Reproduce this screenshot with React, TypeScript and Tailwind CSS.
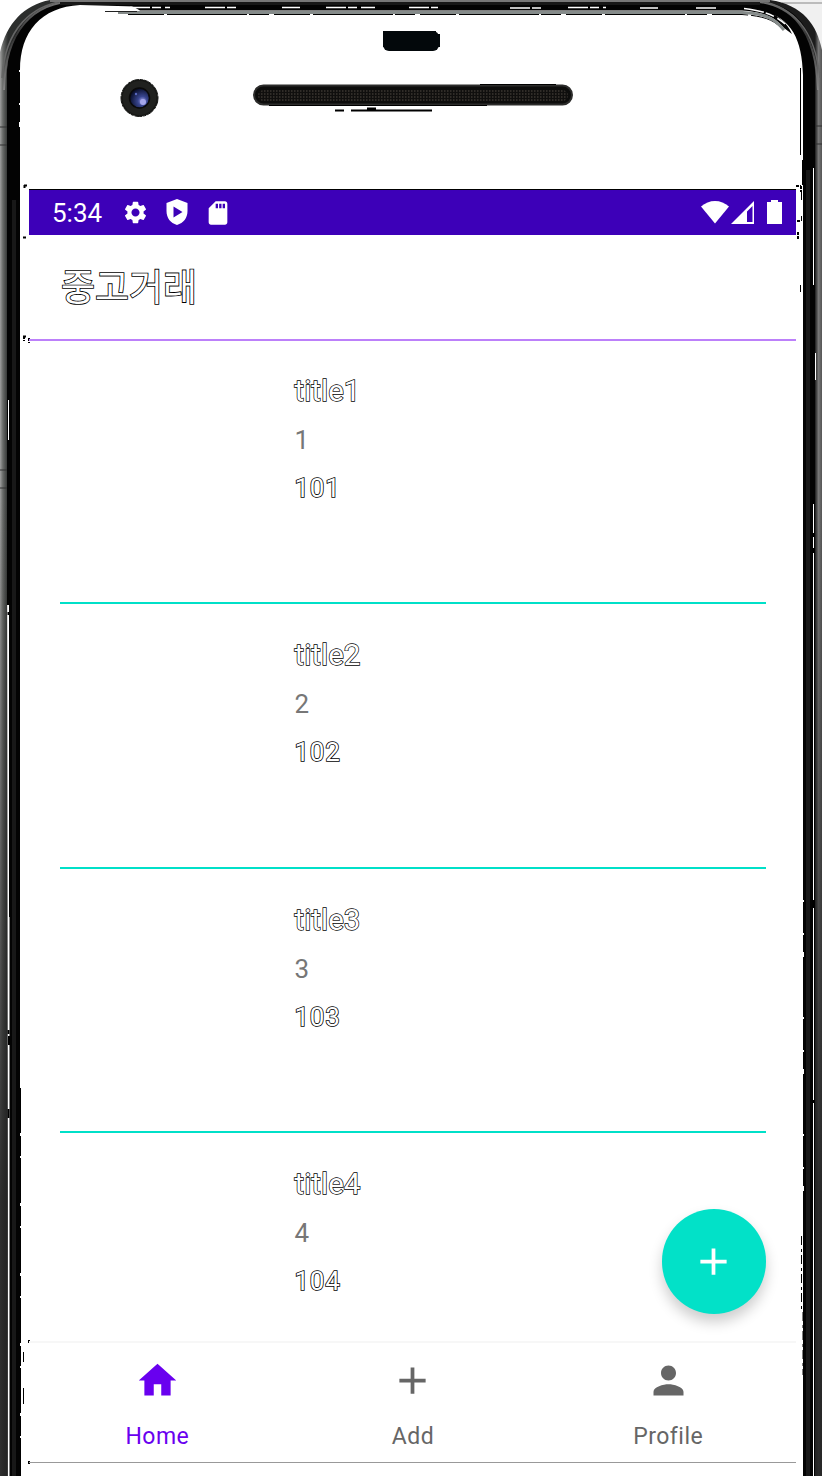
import React from "react";
import { MdHome, MdAdd, MdPerson, MdSettings, MdSdCard } from "react-icons/md";

const items = [1, 2, 3, 4];

function PhoneFrame() {
  return (
    <svg className="pointer-events-none absolute inset-0" width="822" height="1476" viewBox="0 0 822 1476" fill="none">
      <defs>
        <linearGradient id="left" x1="0" x2="8" y1="0" y2="0" gradientUnits="userSpaceOnUse">
          <stop offset="0" stopColor="#a0a0a0" />
          <stop offset="0.35" stopColor="#6a6c6a" />
          <stop offset="1" stopColor="#2c2e2d" />
        </linearGradient>
        <linearGradient id="right" x1="815" x2="822" y1="0" y2="0" gradientUnits="userSpaceOnUse">
          <stop offset="0" stopColor="#1c1c1c" />
          <stop offset="0.5" stopColor="#777" />
          <stop offset="1" stopColor="#555" />
        </linearGradient>
        <linearGradient id="shade" x1="0" x2="0" y1="500" y2="1200" gradientUnits="userSpaceOnUse">
          <stop offset="0" stopColor="#181818" stopOpacity="0" />
          <stop offset="1" stopColor="#222" stopOpacity="0.9" />
        </linearGradient>
        <linearGradient id="rim" x1="0" x2="0" y1="0" y2="90" gradientUnits="userSpaceOnUse">
          <stop offset="0" stopColor="#777" />
          <stop offset="0.4" stopColor="#333" />
          <stop offset="1" stopColor="#858585" />
        </linearGradient>
        <radialGradient id="lens" cx="0.65" cy="0.65" r="0.65">
          <stop offset="0" stopColor="#a9a8ee" />
          <stop offset="0.35" stopColor="#394690" />
          <stop offset="1" stopColor="#080d28" />
        </radialGradient>
        <pattern id="mesh" width="3" height="3" patternUnits="userSpaceOnUse">
          <rect width="3" height="3" fill="#100f0e" />
          <rect width="1.5" height="2" fill="#302c28" />
        </pattern>
      </defs>
      <path d="M775 0H822V70C818 35 803 8 775 0Z" fill="#f0f0f0" />
      <path d="M782 3H822" stroke="#bbb" strokeWidth="2" />
      <path d="M0 52C7 23 24 5 50 0H72C30 7 8 38 7 72V1476H0Z" fill="url(#left)" />
      <path d="M770 0C803 5 817 25 822 50V1476H815V75C812 30 798 10 752 0Z" fill="url(#right)" />
      <path d="M0 500H8V1476H0ZM815 500H822V1476H815Z" fill="url(#shade)" />
      <path d="M0 127H7M0 145H7M0 470H8M0 488H8M816 126H822M816 144H822" stroke="#303030" />
      <path d="M7 130V70C8 25 38 0 80 0H745C795 0 815 27 815 70V1476H803V75C802 34 788 10 745 9H230L80 5C41 7 20 32 20 70V1476H9V605H7Z" fill="#030303" />
      <path d="M14 200V1476M808 170V1476" stroke="#181818" strokeWidth="4" />
      <path d="M4 90C5 30 33 2 77 1H748C792 2 816 29 818 90" stroke="url(#rim)" strokeWidth="2" />
      <path d="M2 78C5 29 31 4 70 0M755 0C794 5 815 30 820 78" stroke="#666" strokeWidth="1.5" />
      <path d="M50 0H770" stroke="#777" strokeWidth="4" />
      <path d="M60 3.500H760" stroke="#171717" strokeWidth="3" />
      <path d="M128 14.500H742C764 16 775 20 783 30" stroke="#000" strokeDasharray="36 3 80 2 20 5" />
      <path d="M130 5H742C764 6 785 17 792 34L784 28C776 18 765 12 742 10.500H140Z" fill="#030303" />
      <path d="M118 12.500H742C765 13.500 774 18 784 30" stroke="#858b8a" strokeWidth="3" />
      <path d="M105 11.500H137" stroke="#222" />
      <path d="M130 7.500H170M205 7.500H240M282 7.500H300M326 7.500H375M409 7.500H438M510 8H541M568 7.500H606M640 8H658M696 8H717M744 8.500C764 11 775 15 785 24" stroke="#fff" strokeWidth="1.500" strokeDasharray="20 2 9 4" />
      <path d="M8.500 400V440M8.500 605V917M9 917V1476M813.500 168V285M815.500 353V380M813.500 500V1476" stroke="#fff" />
      <path d="M8.500 612V615M8.500 1030V1034M9 1036V1045M8.500 1109V1118M813.500 500V504M813.500 533V537M813.500 548V553M813.500 900V908M813.500 1100V1103" stroke="#000" strokeWidth="2" />
      <path d="M19.500 70V180M803.500 900V1200" stroke="#fff" strokeDasharray="2 31 2 17 5 60" />
      <path d="M20.500 1088V1476" stroke="#000" strokeDasharray="45 3 20 2" />
      <path d="M800.500 68V155M802.500 160V185M801.500 192V200M801.500 216V221M800.500 285V292M23.500 1352V1362M23.500 1388V1404" stroke="#000" />
      <path d="M801.500 1236V1312M803 1312V1375" stroke="#000" strokeDasharray="9 4 3 3" />
      <rect x="383" y="31" width="56" height="20" rx="6" fill="#03080b" />
      <path d="M383 31H436V34H440V47H383Z" fill="#03080b" />
      <circle cx="139.500" cy="98" r="18.500" fill="#151614" stroke="#151614" strokeDasharray="8 1 3 1" />
      <circle cx="139.500" cy="98" r="17" fill="#20211f" />
      <circle cx="139.500" cy="98" r="10" fill="url(#lens)" stroke="#090909" strokeWidth="1.500" />
      <circle cx="143" cy="102" r="3" fill="#a4a6eb" />
      <circle cx="136" cy="94" r="1.2" fill="#5968bd" />
      <rect x="254" y="85.500" width="318" height="19" rx="9.500" fill="#0d0d0c" stroke="#2c2c2b" strokeWidth="2" />
      <rect x="258" y="90" width="310" height="11" rx="5.500" fill="url(#mesh)" />
      <path d="M480 84.500H556M269 105.500H487" stroke="#000" />
      <path d="M335 110.500H344M351 110.500H432M367 108.500H376" stroke="#000" strokeWidth="2" />
      <path d="M24 185.500H27M24.500 185V188M23 237.500H27M796 186H801M801 186V192M797 221H800M798 232V240M23 336.500H27M24 336V341M29 338V343M29 1340V1344M29 1461V1465" stroke="#000" strokeWidth="2" strokeDasharray="3 1" />
    </svg>
  );
}

function StatusBar() {
  return (
    <header className="flex h-[46px] items-center border-t border-black bg-[#3d00b8] pl-[23px] text-white">
      <span className="w-[70px] pt-px text-[26px] leading-none">5:34</span>
      <MdSettings className="size-[27px]" />
      <svg className="ml-[14px] h-[27px] w-[28px]" viewBox="0 0 28 27">
        <path fillRule="evenodd" fill="currentColor" d="M14 0L24.5 4V12C24.5 19 20.5 24 14 26C7.500 24 3.500 19 3.500 12V4ZM10.500 7.500V18.500L19.500 13Z" />
      </svg>
      <MdSdCard className="ml-[13px] size-[28px]" />
      <div className="ml-auto flex items-center pb-px pr-[14px]">
        <svg className="h-[24px] w-[28px]" viewBox="0 0 28 24"><path fill="currentColor" d="M0 6.500C8-1 20-1 28 6.500L14 23.500Z" /></svg>
        <svg className="ml-[2px] h-[24px] w-[24px]" viewBox="0 0 24 24"><path fillRule="evenodd" fill="currentColor" d="M23 1V24H0ZM21.500 6L16 11.500V22H21.500Z" /></svg>
        <svg className="ml-[12px] h-[24px] w-[15px]" viewBox="0 0 15 24"><path fill="currentColor" d="M4 0H11V2H15V24H0V2H4Z" /></svg>
      </div>
    </header>
  );
}

function Product({ id }: { id: number }) {
  return (
    <article className="mb-[1.6px] ml-[31px] mr-[30px] h-[263px] border-b-2 border-[#00e0c8] pl-[234.500px] pt-[31.500px] last:border-b-0">
      <h2 className="h-[50px] text-[29.500px] leading-[36px] text-white [-webkit-text-stroke:1.4px_#000] [paint-order:stroke_fill]">title{id}</h2>
      <p className="h-[48px] text-[26px] leading-[34px] text-[#777]">{id}</p>
      <p className="text-[26px] leading-[34px] tracking-[0.7px] text-white [-webkit-text-stroke:1.6px_#000] [paint-order:stroke_fill]">10{id}</p>
    </article>
  );
}

export default function App() {
  return (
    <main className="relative h-[1476px] w-[822px] overflow-hidden bg-white font-[Roboto,'Noto_Sans_CJK_KR',sans-serif]">
      <PhoneFrame />
      <div className="relative ml-[29px] w-[767px] pt-[189px]">
        <StatusBar />
        <div className="flex h-[106px] items-center border-b-2 border-[#bc80fa] pl-[32px] pt-[4px]">
          <h1 className="text-[37px] leading-[54px] text-white [-webkit-text-stroke:1.700px_#000] [paint-order:stroke_fill]">중고거래</h1>
        </div>
        <section className="h-[1002px] overflow-hidden border-b-2 border-[#f7f7f7]">
          {items.map((id) => <Product key={id} id={id} />)}
        </section>
        <nav className="grid h-[120px] grid-cols-3 border-b border-[#999] text-[23px] tracking-[0.5px] text-[#666]">
          <a className="flex flex-col items-center pl-px pt-[15px] text-[#6900ef]"><MdHome className="size-[45px]" /><span className="mt-[18px] leading-[32px]">Home</span></a>
          <a className="flex flex-col items-center pl-px pt-[15px]"><MdAdd className="size-[45px]" /><span className="mt-[18px] leading-[32px]">Add</span></a>
          <a className="flex flex-col items-center pt-[15px]"><MdPerson className="size-[45px]" /><span className="mt-[18px] leading-[32px]">Profile</span></a>
        </nav>
        <button aria-label="Add" className="absolute left-[632.500px] top-[1209px] flex size-[104.500px] items-center justify-center rounded-full bg-[#02e1c8] text-white shadow-[0_8px_14px_rgba(0,0,0,0.2)]"><MdAdd className="size-[45px]" /></button>
      </div>
    </main>
  );
}
